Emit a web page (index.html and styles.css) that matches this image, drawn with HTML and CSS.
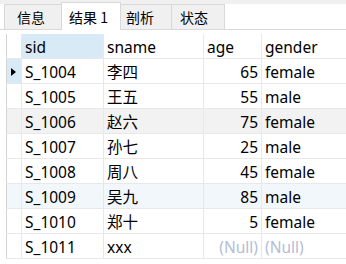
FILE: index.html
```html
<!doctype html>
<html lang="zh-CN">
	<head>
		<meta charset="UTF-8" />
		<title>结果 1</title>
		<link rel="stylesheet" href="styles.css">
	</head>
	<body>
		<div class="tabs">
			<div class="tab">信息</div>
			<div class="tab active">结果 1</div>
			<div class="tab">剖析</div>
			<div class="tab">状态</div>
		</div>

		<div class="grid-wrap">
			<table class="grid">
				<colgroup>
					<col class="c-ind" />
					<col class="c-sid" />
					<col class="c-sname" />
					<col class="c-age" />
					<col class="c-gender" />
				</colgroup>
				<thead>
					<tr>
						<th class="ind"></th>
						<th class="sel">sid</th>
						<th>sname</th>
						<th>age</th>
						<th>gender</th>
					</tr>
				</thead>
				<tbody>
					<tr>
						<td class="ind cur"><span class="arrow"></span></td>
						<td>S_1004</td><td>李四</td><td class="num">65</td><td>female</td>
					</tr>
					<tr>
						<td class="ind"></td>
						<td>S_1005</td><td>王五</td><td class="num">55</td><td>male</td>
					</tr>
					<tr class="gray">
						<td class="ind"></td>
						<td>S_1006</td><td>赵六</td><td class="num">75</td><td>female</td>
					</tr>
					<tr>
						<td class="ind"></td>
						<td>S_1007</td><td>孙七</td><td class="num">25</td><td>male</td>
					</tr>
					<tr>
						<td class="ind"></td>
						<td>S_1008</td><td>周八</td><td class="num">45</td><td>female</td>
					</tr>
					<tr class="blue">
						<td class="ind"></td>
						<td>S_1009</td><td>吴九</td><td class="num">85</td><td>male</td>
					</tr>
					<tr>
						<td class="ind"></td>
						<td>S_1010</td><td>郑十</td><td class="num">5</td><td>female</td>
					</tr>
					<tr>
						<td class="ind"></td>
						<td>S_1011</td><td>xxx</td><td class="num null">(Null)</td><td class="null">(Null)</td>
					</tr>
				</tbody>
			</table>
		</div>
	</body>
</html>
```

FILE: styles.css
```css
html,
body {
	margin: 0;
	padding: 0;
}

body {
	width: 346px;
	height: 264px;
	overflow: hidden;
	background: #fff;
	font-family: "Noto Sans", "Noto Sans CJK SC", sans-serif;
	color: #000;
}

/* tab strip */
.tabs {
	display: flex;
	align-items: flex-end;
	height: 30px;
	padding-left: 4px;
	border-top: 4px solid #f0f0f0;
	border-bottom: 1px solid #d9d9d9;
	box-sizing: border-box;
	margin-bottom: -1px;
}

.tab {
	height: 25px;
	line-height: 24px;
	padding: 0 11px;
	font-size: 14px;
	background: #f0f0f0;
	border: 1px solid #d9d9d9;
	border-bottom: none;
	margin-right: -1px;
	box-sizing: border-box;
	font-family: "Noto Sans CJK SC", sans-serif;
}

.tab:first-child {
	width: 58px;
	padding-left: 12px;
}

.tab.active {
	height: 28px;
	width: 60px;
	padding-left: 7px;
	line-height: 28px;
	background: #fff;
	position: relative;
	top: 1px;
	z-index: 1;
}

.tab:nth-child(3) {
	width: 52px;
	padding-left: 5px;
}

.tab:nth-child(4) {
	width: 54px;
	padding-left: 8px;
}

/* data grid */
.grid-wrap {
	padding: 5px 0 0 6px;
	overflow: hidden;
}

.grid {
	border-collapse: collapse;
	table-layout: fixed;
	width: 340px;
	font-size: 15.5px;
}

.c-ind { width: 15px; }
.c-sid { width: 82px; }
.c-sname { width: 100px; }
.c-age { width: 58px; }
.c-gender { width: 85px; }

.grid th,
.grid td {
	height: 22px;
	padding: 2px 3px 0;
	border: 1px solid #e8e8e8;
	text-align: left;
	font-weight: normal;
	white-space: nowrap;
	overflow: hidden;
	line-height: 22px;
}

.grid th {
	border-top: none;
}

.grid th:last-child,
.grid td:last-child {
	border-right: none;
}

.grid th.sel {
	background: #d9eaf7;
}

.grid .ind {
	padding: 0;
	position: relative;
	border-left: 1px solid #d4d4d4;
}

.grid td.cur {
	background: #d9eaf7;
}

.arrow {
	position: absolute;
	left: 4px;
	top: 9px;
	width: 0;
	height: 0;
	border-top: 4px solid transparent;
	border-bottom: 4px solid transparent;
	border-left: 5px solid #000;
}

.grid td.num {
	text-align: right;
}

.grid td.null {
	color: #b4bdd4;
}

tr.gray td {
	background: #f2f2f2;
}

tr.blue td {
	background: #f2f7fc;
}
```
